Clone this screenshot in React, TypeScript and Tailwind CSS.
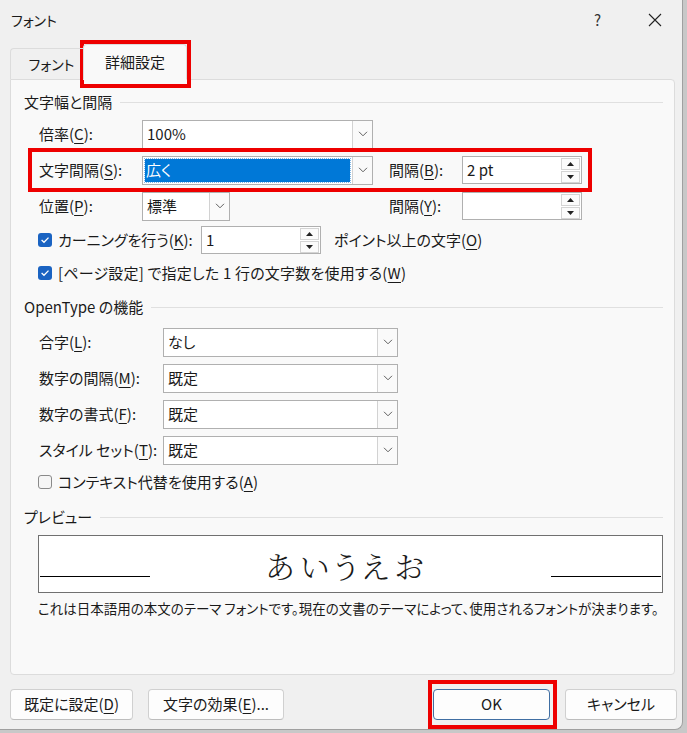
import React from "react";

function U({ c }: { c: string }) {
  return <span className="underline underline-offset-[3px] decoration-[1px]">{c}</span>;
}

function Chevron() {
  return (
    <svg width="10" height="6" viewBox="0 0 10 6" fill="none">
      <path d="M1 0.8 L5 4.8 L9 0.8" stroke="#606060" strokeWidth="1" />
    </svg>
  );
}

function Dropdown({
  cls,
  value,
  selected,
}: {
  cls: string;
  value: string;
  selected?: boolean;
}) {
  return (
    <div className={"flex h-[29px] border border-[#b0b0b0] bg-white " + cls}>
      <div className="flex-1 flex items-center p-[2px]">
        {selected ? (
          <div className="w-full h-full bg-[#0078d7] text-white flex items-center pl-[1px] outline outline-1 outline-dotted outline-[#7fb7e6]">
            {value}
          </div>
        ) : (
          <span className="pl-[2px]">{value}</span>
        )}
      </div>
      <div className="w-[20px] border-l border-[#d2d2d2] bg-[#fafafa] flex items-center justify-center">
        <Chevron />
      </div>
    </div>
  );
}

function SpinBtns() {
  return (
    <div className="w-[20px] flex flex-col justify-center gap-[1px] pr-[1px]">
      <div className="h-[12px] border border-[#d4d4d4] bg-[#fbfbfb] flex items-center justify-center">
        <svg width="7" height="4" viewBox="0 0 7 4">
          <path d="M0 4 L3.5 0 L7 4Z" fill="#222" />
        </svg>
      </div>
      <div className="h-[12px] border border-[#d4d4d4] bg-[#fbfbfb] flex items-center justify-center">
        <svg width="7" height="4" viewBox="0 0 7 4">
          <path d="M0 0 L3.5 4 L7 0Z" fill="#222" />
        </svg>
      </div>
    </div>
  );
}

function Spin({ value }: { value: string }) {
  return (
    <div className="flex w-[120px] h-[28px] border border-[#b0b0b0] bg-white">
      <div className="flex-1 flex items-center pl-[4px]">{value}</div>
      <SpinBtns />
    </div>
  );
}

function CheckOn() {
  return (
    <div className="w-[14px] h-[14px] rounded-[3px] bg-[#1a63c2] flex items-center justify-center shrink-0">
      <svg width="10" height="8" viewBox="0 0 10 8" fill="none">
        <path d="M1.6 4.1 L4 6.3 L8.5 1.6" stroke="white" strokeWidth="1.3" />
      </svg>
    </div>
  );
}

function CheckOff() {
  return <div className="w-[14px] h-[14px] rounded-[3px] border border-[#8a8a8a] bg-[#f6f6f6] shrink-0" />;
}

function Header({ text }: { text: string }) {
  return (
    <div className="flex items-center h-[22px]">
      <span>{text}</span>
      <div className="flex-1 h-px bg-[#e0e0e0] ml-[8px]" />
    </div>
  );
}

function Btn({ cls, children }: { cls: string; children: React.ReactNode }) {
  return (
    <div
      className={
        "h-[31px] rounded-[4px] bg-[#fdfdfd] flex items-center justify-center " + cls
      }
    >
      {children}
    </div>
  );
}

export default function App() {
  return (
    <div className="relative w-[687px] h-[733px] bg-[#c8c8c8] overflow-hidden text-[15px] text-[#1a1a1a] font-['Noto_Sans_CJK_JP','Noto_Sans',sans-serif] [font-feature-settings:'palt']">
      <div className="w-[683px] h-[730px] bg-[#f0f0f0] rounded-br-[8px] border-r border-b border-[#a0a0a0] flex flex-col">
        {/* title bar */}
        <div className="h-[40px] flex items-center pl-[11px] shrink-0">
          <span className="text-[14px]">フォント</span>
          <span className="ml-auto mr-[47px] text-[15px] text-[#333]">?</span>
          <svg width="14" height="14" viewBox="0 0 14 14" className="mr-[20px]">
            <path d="M1 1 L13 13 M13 1 L1 13" stroke="#222" strokeWidth="1.1" />
          </svg>
        </div>
        {/* tabs */}
        <div className="h-[39px] flex items-end pl-[10px] relative z-10 shrink-0">
          <div className="w-[73px] h-[31px] flex items-center justify-center pl-[9px] pt-[1px] border-l border-t border-[#dcdcdc] rounded-tl-[4px] text-[14px]">
            フォント
          </div>
          <div className="w-[104px] h-[36px] -mb-px bg-[#f9f9f9] border border-[#dcdcdc] border-b-[#f9f9f9] rounded-t-[4px] flex items-center justify-center">
            詳細設定
          </div>
        </div>
        {/* panel */}
        <div className="ml-[10px] w-[665px] h-[596px] shrink-0 bg-[#f9f9f9] border border-[#dcdcdc] rounded-b-[4px] rounded-tr-[4px] pt-[11px] pl-[13px] pr-[11px] flex flex-col">
          <Header text="文字幅と間隔" />
          {/* row 倍率 */}
          <div className="mt-[3px] h-[36px] flex items-center pl-[15px]">
            <div className="w-[103px]">
              倍率(<U c="C" />):
            </div>
            <Dropdown cls="w-[231px]" value="100%" />
          </div>
          {/* row 文字間隔 */}
          <div className="h-[36px] flex items-center pl-[15px]">
            <div className="w-[103px]">
              文字間隔(<U c="S" />):
            </div>
            <Dropdown cls="w-[231px]" value="広く" selected />
            <div className="w-[73px] ml-[16px]">
              間隔(<U c="B" />):
            </div>
            <Spin value="2 pt" />
          </div>
          {/* row 位置 */}
          <div className="h-[36px] flex items-center pl-[15px]">
            <div className="w-[103px]">
              位置(<U c="P" />):
            </div>
            <div className="w-[231px]">
              <Dropdown cls="w-[88px]" value="標準" />
            </div>
            <div className="w-[73px] ml-[16px]">
              間隔(<U c="Y" />):
            </div>
            <Spin value="" />
          </div>
          {/* kerning */}
          <div className="h-[32px] flex items-center pl-[14px]">
            <div className="w-[163px] flex items-center gap-[6px]">
              <CheckOn />
              <span>
                カーニングを行う(<U c="K" />):
              </span>
            </div>
            <Spin value="1" />
            <span className="ml-[13px]">
              ポイント以上の文字(<U c="O" />)
            </span>
          </div>
          {/* page setting */}
          <div className="h-[34px] flex items-center pl-[14px] gap-[6px]">
            <CheckOn />
            <span className="tracking-[0.2px]">
              [ページ設定] で指定した 1 行の文字数を使用する(<U c="W" />)
            </span>
          </div>

          <div className="mt-[6px]">
            <Header text="OpenType の機能" />
          </div>
          <div className="mt-[6px] h-[36px] flex items-center pl-[15px]">
            <div className="w-[124px]">
              合字(<U c="L" />):
            </div>
            <Dropdown cls="w-[235px]" value="なし" />
          </div>
          <div className="h-[36px] flex items-center pl-[15px]">
            <div className="w-[124px]">
              数字の間隔(<U c="M" />):
            </div>
            <Dropdown cls="w-[235px]" value="既定" />
          </div>
          <div className="h-[36px] flex items-center pl-[15px]">
            <div className="w-[124px]">
              数字の書式(<U c="F" />):
            </div>
            <Dropdown cls="w-[235px]" value="既定" />
          </div>
          <div className="h-[36px] flex items-center pl-[15px]">
            <div className="w-[124px]">
              スタイル セット(<U c="T" />):
            </div>
            <Dropdown cls="w-[235px]" value="既定" />
          </div>
          <div className="h-[28px] flex items-center pl-[14px] gap-[6px]">
            <CheckOff />
            <span>
              コンテキスト代替を使用する(<U c="A" />)
            </span>
          </div>

          <div className="mt-[10px]">
            <Header text="プレビュー" />
          </div>
          <div className="mt-[7px] ml-[14px] w-[625px] h-[58px] border border-[#707070] bg-white flex items-end px-[1px] pb-[15px]">
            <div className="w-[110px] h-px bg-black" />
            <div className="flex-1 flex justify-center pl-[4px] pr-[10px]">
              <span className="text-[30px] leading-none tracking-[5px] mb-[-3px] font-light font-['Noto_Serif_CJK_JP','Noto_Sans_CJK_JP',serif]">
                あいうえお
              </span>
            </div>
            <div className="w-[110px] h-px bg-black" />
          </div>
          <div className="mt-[4px] h-[22px] flex items-center pl-[14px] text-[13.5px] whitespace-nowrap">
            これは日本語用の本文のテーマ フォントです。現在の文書のテーマによって、使用されるフォントが決まります。
          </div>
        </div>
        {/* buttons */}
        <div className="mt-[14px] flex pl-[10px] shrink-0">
          <Btn cls="w-[123px] border border-[#d0d0d0] border-b-[#bdbdbd]">
            既定に設定(<U c="D" />)
          </Btn>
          <Btn cls="w-[136px] ml-[15px] border border-[#d0d0d0] border-b-[#bdbdbd]">
            文字の効果(<U c="E" />)...
          </Btn>
          <Btn cls="w-[117px] ml-[149px] border border-[#3f6ea3]">OK</Btn>
          <Btn cls="w-[112px] ml-[15px] border border-[#d0d0d0] border-b-[#bdbdbd]">
            キャンセル
          </Btn>
        </div>
      </div>

      {/* red annotation boxes */}
      <div className="absolute left-[80px] top-[40px] w-[111px] h-[48px] border-[4px] border-[#ee0000] pointer-events-none" />
      <div className="absolute left-[28px] top-[148px] w-[564px] h-[44px] border-[4px] border-[#ee0000] pointer-events-none" />
      <div className="absolute left-[428px] top-[680px] w-[129px] h-[49px] border-[4px] border-[#ee0000] pointer-events-none" />
    </div>
  );
}
